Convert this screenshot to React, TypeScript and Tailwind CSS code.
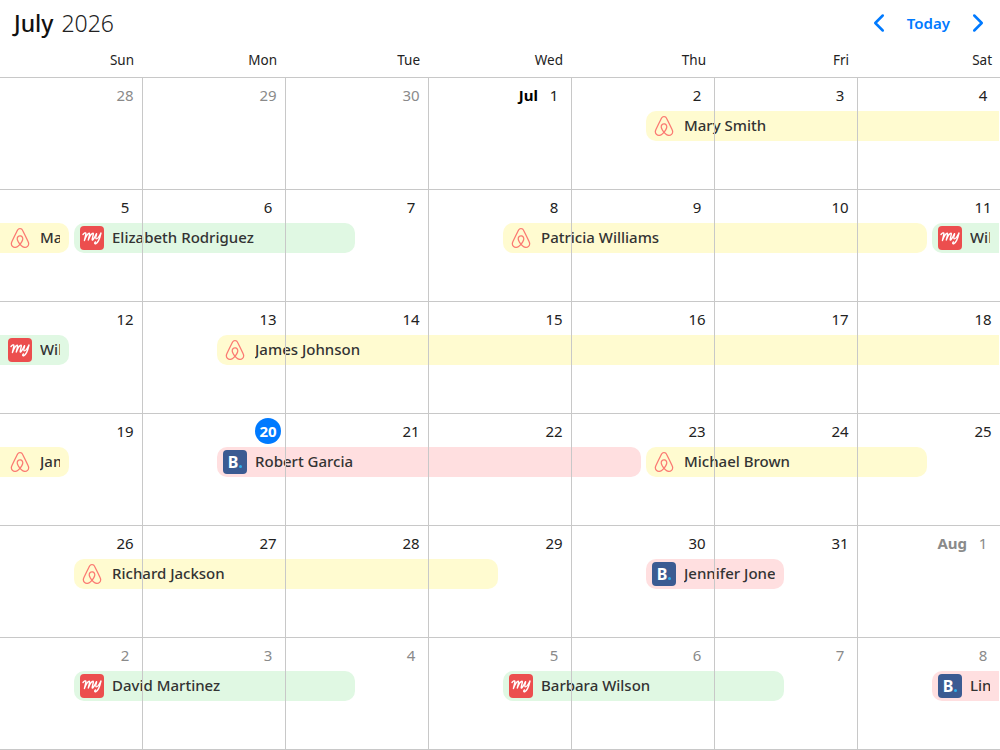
import { SiAirbnb } from "react-icons/si";
import { ChevronLeft, ChevronRight } from "lucide-react";

type Kind = "air" | "my" | "book";
type Ev = { name: string; kind: Kind; pos: string; cont?: boolean; open?: boolean };
type Day = { n: number; dim?: boolean; prefix?: string; today?: boolean };

const bg: Record<Kind, string> = {
  air: "bg-[#fffbd0]",
  my: "bg-[#e0f8e3]",
  book: "bg-[#ffdfe0]",
};

function Logo({ kind }: { kind: Kind }) {
  if (kind === "air")
    return (
      <span className="flex h-6 w-6 shrink-0 items-center justify-center">
        <SiAirbnb className="h-5 w-5 text-[#fb7a72]" />
      </span>
    );
  if (kind === "my")
    return (
      <span className="flex h-6 w-6 shrink-0 items-center justify-center rounded-[4px] bg-[#ec4e4e]">
        <svg viewBox="0 0 24 24" className="h-6 w-6" fill="none" stroke="#fff" strokeWidth="1.4" strokeLinecap="round" strokeLinejoin="round">
          <path d="M3 8.5c1.2-1.6 2.8-2.2 2.9-1 .1 1-1.2 5.2-1.5 7 1.1-2.8 3.2-7.2 4.8-7.2 1.1 0-.6 4.8-.9 6.8 1.1-2.8 3.2-6.8 4.7-6.8 1.1 0-1 5.2-.8 6.4.1.9 1.4 0 4.2-6" />
          <path d="M16.6 8c-.6 1.9-1.2 4.4-.4 4.8.9.4 3.2-2.8 4.8-5.8-1 4.4-2.8 9.8-5.3 10.8-1.1.3-1.4-1-.2-1.9" />
        </svg>
      </span>
    );
  return (
    <span className="flex h-6 w-6 shrink-0 items-center justify-center rounded-[4px] bg-[#3b5b92] text-[16px] leading-6 font-bold text-white">
      B
      <span className="mt-[9px] ml-[1px] h-[3px] w-[3px] rounded-full bg-[#2fb0ea]" />
    </span>
  );
}

function Event({ ev }: { ev: Ev }) {
  return (
    <div
      className={`${ev.pos} ${bg[ev.kind]} mt-[33px] mr-[2.5px] flex h-[30px] items-center gap-2 pr-[9px] ${
        ev.cont ? "-ml-5 rounded-r-[10px] pl-[28px]" : "ml-[2.5px] rounded-l-[10px] pl-[6px]"
      } ${ev.open ? "-mr-5" : "rounded-r-[10px]"}`}
    >
      <Logo kind={ev.kind} />
      <span className="min-w-0 flex-1 overflow-hidden pb-[2px] text-[15px] font-medium whitespace-nowrap text-[#333]">
        {ev.name}
      </span>
    </div>
  );
}

const weeks: { days: Day[]; events: Ev[] }[] = [
  {
    days: [
      { n: 28, dim: true },
      { n: 29, dim: true },
      { n: 30, dim: true },
      { n: 1, prefix: "Jul" },
      { n: 2 },
      { n: 3 },
      { n: 4 },
    ],
    events: [{ name: "Mary Smith", kind: "air", pos: "col-start-10 col-end-15", open: true }],
  },
  {
    days: [{ n: 5 }, { n: 6 }, { n: 7 }, { n: 8 }, { n: 9 }, { n: 10 }, { n: 11 }],
    events: [
      { name: "Mary Smith", kind: "air", pos: "col-start-1 col-end-2", cont: true },
      { name: "Elizabeth Rodriguez", kind: "my", pos: "col-start-2 col-end-6" },
      { name: "Patricia Williams", kind: "air", pos: "col-start-8 col-end-14" },
      { name: "William Taylor", kind: "my", pos: "col-start-14 col-end-15", open: true },
    ],
  },
  {
    days: [{ n: 12 }, { n: 13 }, { n: 14 }, { n: 15 }, { n: 16 }, { n: 17 }, { n: 18 }],
    events: [
      { name: "William Taylor", kind: "my", pos: "col-start-1 col-end-2", cont: true },
      { name: "James Johnson", kind: "air", pos: "col-start-4 col-end-15", open: true },
    ],
  },
  {
    days: [{ n: 19 }, { n: 20, today: true }, { n: 21 }, { n: 22 }, { n: 23 }, { n: 24 }, { n: 25 }],
    events: [
      { name: "James Johnson", kind: "air", pos: "col-start-1 col-end-2", cont: true },
      { name: "Robert Garcia", kind: "book", pos: "col-start-4 col-end-10" },
      { name: "Michael Brown", kind: "air", pos: "col-start-10 col-end-14" },
    ],
  },
  {
    days: [
      { n: 26 },
      { n: 27 },
      { n: 28 },
      { n: 29 },
      { n: 30 },
      { n: 31 },
      { n: 1, dim: true, prefix: "Aug" },
    ],
    events: [
      { name: "Richard Jackson", kind: "air", pos: "col-start-2 col-end-8" },
      { name: "Jennifer Jones", kind: "book", pos: "col-start-10 col-end-12" },
    ],
  },
  {
    days: [
      { n: 2, dim: true },
      { n: 3, dim: true },
      { n: 4, dim: true },
      { n: 5, dim: true },
      { n: 6, dim: true },
      { n: 7, dim: true },
      { n: 8, dim: true },
    ],
    events: [
      { name: "David Martinez", kind: "my", pos: "col-start-2 col-end-6" },
      { name: "Barbara Wilson", kind: "my", pos: "col-start-8 col-end-12" },
      { name: "Linda Anderson", kind: "book", pos: "col-start-14 col-end-15", open: true },
    ],
  },
];

const labels = ["Sun", "Mon", "Tue", "Wed", "Thu", "Fri", "Sat"];

function Cell({ d }: { d: Day }) {
  return (
    <div className="flex h-full items-start justify-end border-r border-[#c8c8c8] pt-[6px] pr-[4px] text-[15px] leading-[22px]">
      {d.prefix && (
        <span className={`mr-[3px] font-bold ${d.dim ? "text-[#8a8a8a]" : "text-black"}`}>{d.prefix}</span>
      )}
      {d.today ? (
        <span className="-mt-[2px] h-[26px] w-[26px] rounded-full bg-[#007aff] text-center leading-[26px] font-bold text-white">
          {d.n}
        </span>
      ) : (
        <span className={`w-[26px] text-center ${d.dim ? "text-[#8a8a8a]" : "text-[#222]"}`}>{d.n}</span>
      )}
    </div>
  );
}

export default function App() {
  return (
    <div className="h-[750px] w-[1000px] overflow-hidden bg-white font-['Noto_Sans',sans-serif]">
      <header className="flex h-[78px] w-[1001px] flex-col border-b border-[#c8c8c8]">
        <div className="flex h-[46px] items-center justify-between pr-[8px] pl-[14px]">
          <h1 className="text-[23px] leading-none text-[#222]">
            <span className="font-[550] text-[#111]">July</span> <span className="ml-[2px] font-light">2026</span>
          </h1>
          <div className="flex items-center">
            <ChevronLeft className="h-[30px] w-[30px] text-[#007aff]" strokeWidth={2} />
            <span className="mx-[13px] text-[15px] font-semibold text-[#007aff]">Today</span>
            <ChevronRight className="h-[30px] w-[30px] text-[#007aff]" strokeWidth={2} />
          </div>
        </div>
        <div className="grid grid-cols-[repeat(7,143px)] pt-[4px]">
          {labels.map((l) => (
            <div key={l} className="pr-[9px] text-right text-[13.5px] leading-5 text-[#222]">
              {l}
            </div>
          ))}
        </div>
      </header>
      {weeks.map((w, i) => (
        <section key={i} className="relative h-[112px] w-[1001px] border-b border-[#c8c8c8]">
          <div className="absolute inset-0 grid grid-cols-14 items-start">
            {w.events.map((ev) => (
              <Event key={ev.name + ev.pos} ev={ev} />
            ))}
          </div>
          <div className="relative grid h-full grid-cols-[repeat(7,143px)]">
            {w.days.map((d, j) => (
              <Cell key={j} d={d} />
            ))}
          </div>
        </section>
      ))}
    </div>
  );
}
